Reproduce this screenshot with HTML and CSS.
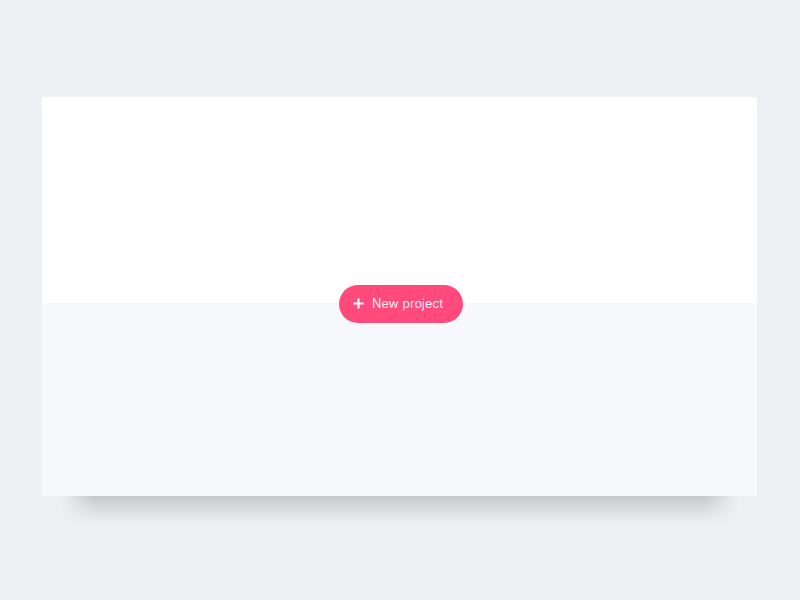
FILE: index.html
```html
<!DOCTYPE html>
<html lang="en">
<head>
  <meta charset="UTF-8" />
  <title>Projects</title>
  <link rel="stylesheet" href="styles.css">
</head>
<body>

<div class="board">
  <div class="board-top"></div>
  <div class="board-bottom"></div>
  <button class="new-project">
    <svg width="11" height="11" viewBox="0 0 11 11"><path d="M5.5 0.5v10M0.5 5.5h10" stroke="#fff" stroke-width="2"/></svg>
    <span>New project</span>
  </button>
</div>
<div class="board-shadow"></div>

</body>
</html>
```

FILE: styles.css
```css
body {
  margin: 0;
  padding: 97px 43px 0 42px;
  background: #eff0f3;
  font-family: 'Inter', 'Noto Sans', sans-serif;
}

.board {
  position: relative;
  height: 399px;
  display: flex;
  flex-direction: column;
}

.board-top {
  height: 206px;
  background: #ffffff;
}

.board-bottom {
  flex: 1;
  background: #f7f8fb;
}

/* soft shadow strip under the card */
.board-shadow {
  height: 28px;
  margin: 0 18px;
  background:
    linear-gradient(to right, #eff0f3, rgba(239,240,243,0) 34px, rgba(239,240,243,0) calc(100% - 34px), #eff0f3),
    linear-gradient(to bottom, rgba(0,0,0,0.17), rgba(0,0,0,0.1) 35%, rgba(0,0,0,0));
}

.new-project {
  position: absolute;
  left: 297px;
  top: 188px;
  width: 124px;
  height: 38px;
  display: flex;
  align-items: center;
  gap: 8px;
  padding: 0 0 1px 14px;
  border: none;
  border-radius: 19px;
  background: #ff4a7b;
  color: rgba(255,255,255,0.92);
  font-family: 'Inter', 'Noto Sans', sans-serif;
  font-size: 12.5px;
  cursor: pointer;
}
```
